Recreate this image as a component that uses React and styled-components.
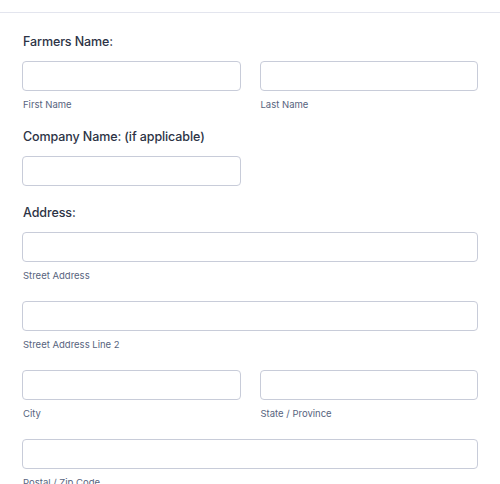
import styled, { createGlobalStyle } from "styled-components";

const GlobalStyle = createGlobalStyle`
    html, body {
        margin: 0;
        padding: 0;
        height: 484px;
        overflow: hidden;
        background: #ffffff;
        font-family: Inter, "Noto Sans", "Liberation Sans", sans-serif;
    }
`

const fields = [
    { label: "Farmers Name:", rows: [[{ sub: "First Name" }, { sub: "Last Name" }]] },
    { label: "Company Name: (if applicable)", rows: [[{ sub: null, half: true }]] },
    {
        label: "Address:",
        rows: [
            [{ sub: "Street Address" }],
            [{ sub: "Street Address Line 2" }],
            [{ sub: "City" }, { sub: "State / Province" }],
            [{ sub: "Postal / Zip Code" }],
        ],
    },
];

const App = () => {
    return (
        <Page>
            <GlobalStyle />
            <Form>
                {fields.map((field) => (
                    <Field key={field.label} $bare={field.rows[0][0].sub === null}>
                        <Label>{field.label}</Label>
                        {field.rows.map((row, i) => (
                            <Row key={i} cols={row.length === 2 || row[0].half ? 2 : 1}>
                                {row.map((cell, j) => (
                                    <Cell key={j}>
                                        <Input type="text" />
                                        {cell.sub && <SubLabel>{cell.sub}</SubLabel>}
                                    </Cell>
                                ))}
                            </Row>
                        ))}
                    </Field>
                ))}
            </Form>
        </Page>
    );
};

export default App;

const Page = styled.div`
    width: 500px;
    padding-top: 12px;
`
const Form = styled.form`
    border-top: 1px solid #e3e5ee;
    padding: 20px 22px 0;
    display: flex;
    flex-direction: column;
    gap: 16px;
`
const Field = styled.div`
    display: flex;
    flex-direction: column;
    padding-bottom: ${props => props.$bare ? '2px' : '0'};
`
const Label = styled.label`
    padding-left: 1px;
    font-size: 12.5px;
    line-height: 18px;
    font-weight: 500;
    letter-spacing: -0.1px;
    color: #2c3345;
    margin-bottom: 10px;
`
const Row = styled.div`
    display: grid;
    grid-template-columns: ${props => props.cols === 2 ? '1fr 1fr' : '1fr'};
    column-gap: 19px;
    & + & {
        margin-top: 18px;
    }
`
const Cell = styled.div`
    display: flex;
    flex-direction: column;
`
const Input = styled.input`
    box-sizing: border-box;
    width: 100%;
    height: 30px;
    border: 1px solid #c8ccd9;
    border-radius: 4px;
    background: #ffffff;
    padding: 0 8px;
    font-family: inherit;
    font-size: 12px;
    color: #2c3345;
    outline: none;
`
const SubLabel = styled.span`
    margin-top: 7px;
    padding-left: 1px;
    font-size: 9.5px;
    line-height: 14px;
    color: #57647e;
`
